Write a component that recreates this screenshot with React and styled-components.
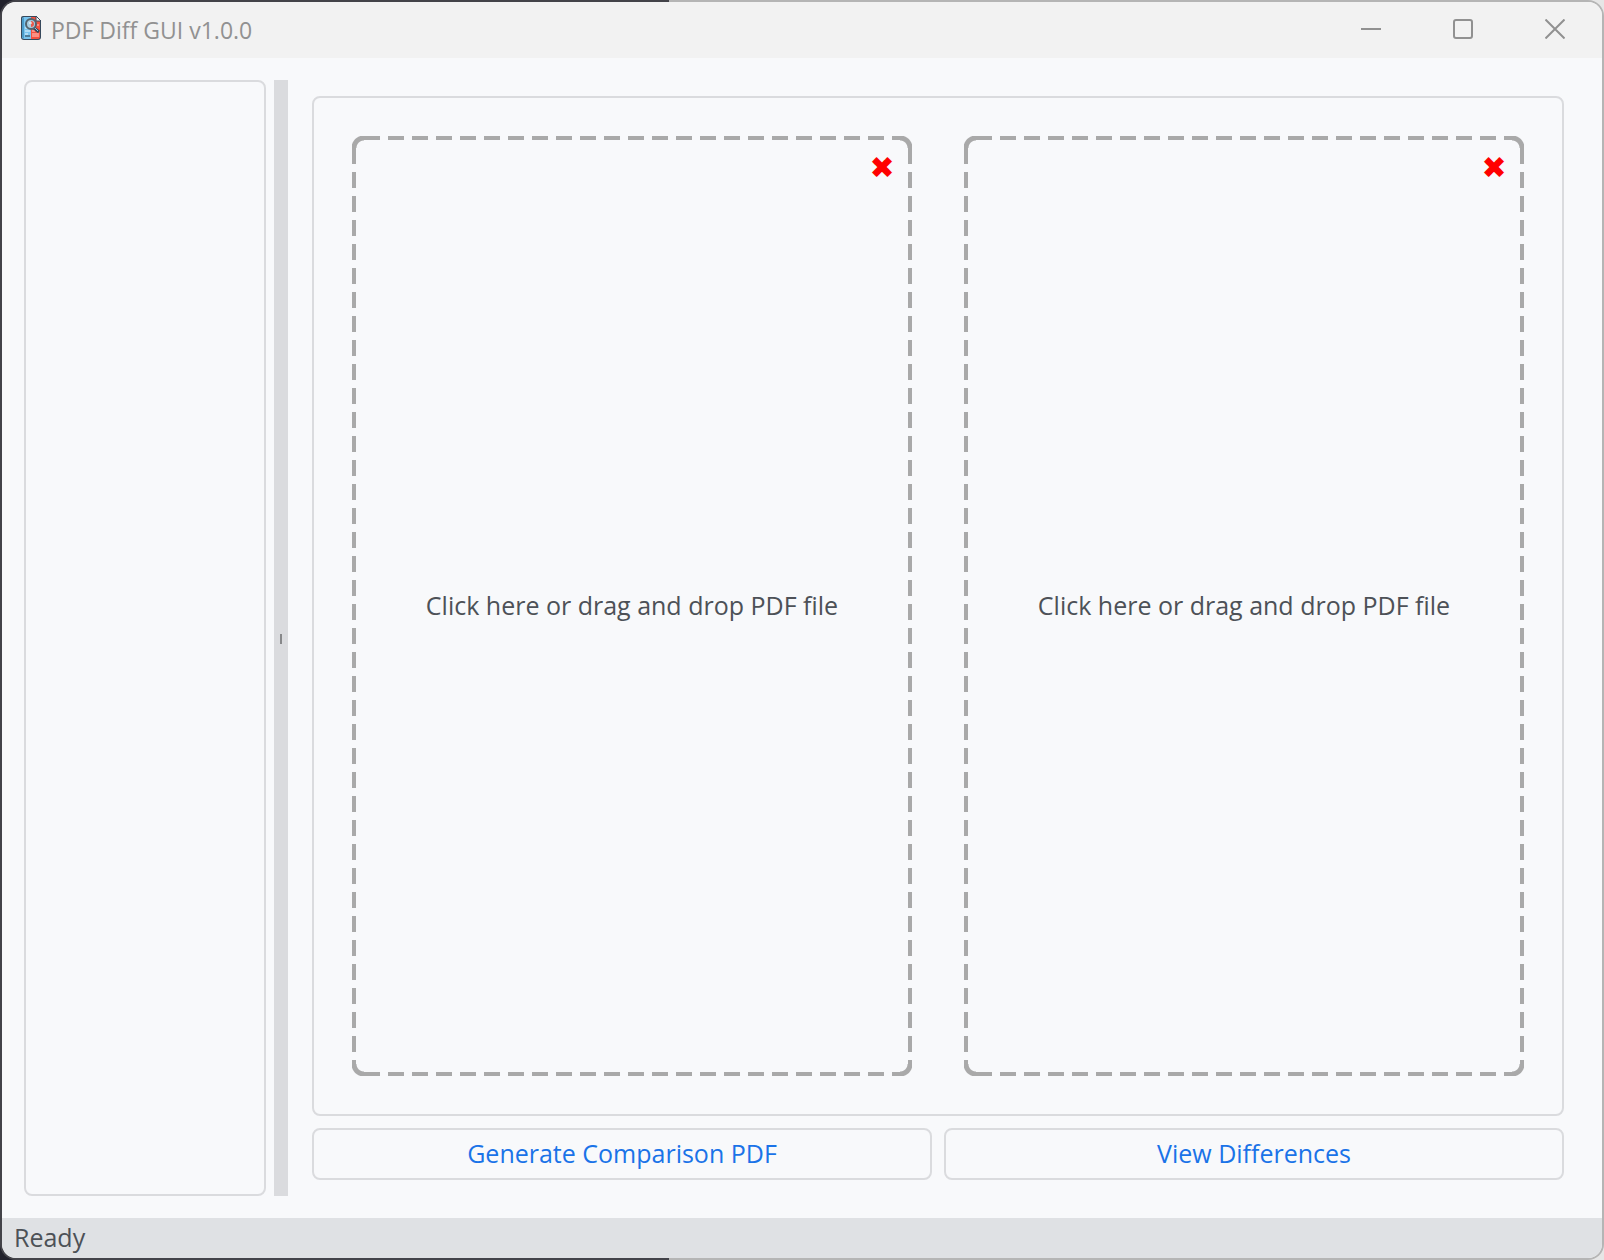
import React from "react";
import styled, { createGlobalStyle } from "styled-components";

const line = "#dadbde";
const dash = "#a9a9a9";

const GlobalStyle = createGlobalStyle`
  *, *::before, *::after { box-sizing: border-box; }
  body {
    margin: 0;
    font-family: "Segoe UI", "Open Sans", "Noto Sans", sans-serif;
    font-size: 25px;
    line-height: 32px;
    color: #4d5157;
  }
  button { font: inherit; color: inherit; }
`;

const Desktop = styled.div`
  min-height: 100vh;
  display: flex;
  background: linear-gradient(90deg, #22222c 0 41.7%, #e6e6e6 41.7%);
`;

const Window = styled.div`
  flex: 1;
  display: flex;
  flex-direction: column;
  overflow: hidden;
  border: 2px solid rgba(115, 115, 115, 0.42);
  border-radius: 16px;
  background: #f8f9fb;
  background-clip: padding-box;
`;

const TitleBar = styled.header`
  display: flex;
  align-items: center;
  height: 56px;
  padding-left: 18px;
  background: #f2f2f2;
  color: #919191;
`;

const AppIcon = styled.svg`
  width: 22px;
  height: 24px;
  margin-bottom: 4px;
`;

const Title = styled.h1`
  flex: 1;
  margin: 0 0 0 9px;
  font-size: 23px;
  font-weight: 400;
`;

const WindowButton = styled.button`
  display: grid;
  place-items: center;
  width: 92px;
  height: 56px;
  padding: 0 2px 2px 0;
  border: 0;
  background: none;

  svg {
    width: 20px;
    height: 20px;
    fill: none;
    stroke: #919191;
    stroke-width: 2;
  }
`;

const Workspace = styled.main`
  flex: 1;
  display: flex;
  padding: 22px;
`;

const PageList = styled.aside`
  width: 242px;
  border: 2px solid ${line};
  border-radius: 8px;
`;

const Splitter = styled.div`
  display: grid;
  place-items: center;
  width: 14px;
  margin: 0 8px;
  padding-top: 2px;
  background: ${line};
  cursor: col-resize;

  &::before {
    content: "";
    width: 2px;
    height: 10px;
    background: #87888a;
  }
`;

const Content = styled.section`
  flex: 1;
  display: flex;
  flex-direction: column;
  gap: 12px;
  padding: 16px;
`;

const FilePanel = styled.div`
  flex: 1;
  display: grid;
  grid-template-columns: 1fr 1fr;
  gap: 52px;
  padding: 38px;
  border: 2px solid ${line};
  border-radius: 8px;
`;

const corner = (at) =>
  `radial-gradient(circle at ${at}, transparent 7px, ${dash} 8px, ${dash} 12px, transparent 13px)`;
const side = (direction) =>
  `repeating-linear-gradient(${direction}, ${dash} 0 16px, transparent 16px 24px)`;

const DropZone = styled.div`
  display: grid;
  background-image:
    ${corner("100% 100%")}, ${corner("0 100%")},
    ${corner("100% 0")}, ${corner("0 0")},
    ${side("90deg")}, ${side("90deg")},
    ${side("180deg")}, ${side("180deg")};
  background-position:
    0 0, 100% 0, 0 100%, 100% 100%,
    12px 0, 12px 100%, 0 12px, 100% 12px;
  background-size:
    12px 12px, 12px 12px, 12px 12px, 12px 12px,
    calc(100% - 24px) 4px, calc(100% - 24px) 4px,
    4px calc(100% - 24px), 4px calc(100% - 24px);
  background-repeat: no-repeat;
`;

const PickFile = styled.button`
  grid-area: 1 / 1;
  padding: 0 0 2px;
  border: 0;
  background: none;
  cursor: pointer;
`;

const ClearFile = styled.button`
  grid-area: 1 / 1;
  place-self: start end;
  display: grid;
  place-items: center;
  width: 32px;
  height: 32px;
  margin: 16px 14px;
  padding: 0;
  border: 0;
  background: none;
  color: #ff0000;
  font-family: "DejaVu Sans", sans-serif;
  font-size: 30px;
  cursor: pointer;
`;

const Actions = styled.div`
  display: grid;
  grid-template-columns: 1fr 1fr;
  gap: 12px;
`;

const ActionButton = styled.button`
  height: 52px;
  padding: 0 0 2px;
  border: 2px solid ${line};
  border-radius: 8px;
  background: none;
  color: #1a73e8;
  cursor: pointer;
`;

const StatusBar = styled.footer`
  height: 40px;
  padding: 3px 12px;
  background: #dfe1e4;
`;

function FileDrop({ name }) {
  return (
    <DropZone>
      <PickFile type="button">Click here or drag and drop PDF file</PickFile>
      <ClearFile type="button" aria-label={`Clear ${name} file`}>✖</ClearFile>
    </DropZone>
  );
}

function CompareIcon() {
  return (
    <AppIcon viewBox="0 0 22 24" aria-hidden="true">
      <path d="M3 0h13l5 5v16a3 3 0 0 1-3 3H4a3 3 0 0 1-3-3V2a2 2 0 0 1 2-2z" fill="#36495c" />
      <path d="M4 1h7v22H4a2 2 0 0 1-2-2V3a2 2 0 0 1 2-2z" fill="#79c4ef" />
      <path d="M2 3v18l2 2V1z" fill="#4b9bc8" />
      <path d="M11 1h5v4h4v16a2 2 0 0 1-2 2h-7z" fill="#f4513f" />
      <path d="M16 0l5 5h-5z" fill="#f1f1f1" stroke="#36495c" />
      <path d="M5 15h5M5 18h3M5 12h3" stroke="#e7f5fd" />
      <path d="M5 20h5" stroke="#263645" />
      <path d="M12 15h3M12 18h7M12 20h7M17 9h2" stroke="#ffd0c8" />
      <path d="M14 12l5 4" stroke="#34495a" strokeWidth="3" />
      <path d="M15 12l3 3" stroke="#8ecbea" />
      <circle cx="11" cy="8" r="5" fill="#a8cde0" stroke="#53636d" strokeWidth="2" />
      <path d="M11 5a3 3 0 0 1 0 6z" fill="#e85a4c" />
      <path d="M9 7h3" stroke="#fff" />
    </AppIcon>
  );
}

export default function App() {
  return (
    <>
      <GlobalStyle />
      <Desktop>
        <Window>
          <TitleBar>
            <CompareIcon />
            <Title>PDF Diff GUI v1.0.0</Title>
            <WindowButton type="button" aria-label="Minimize">
              <svg viewBox="0 0 20 20"><path d="M0 10h20" /></svg>
            </WindowButton>
            <WindowButton type="button" aria-label="Maximize">
              <svg viewBox="0 0 20 20"><rect x="1" y="1" width="18" height="18" rx="2" /></svg>
            </WindowButton>
            <WindowButton type="button" aria-label="Close">
              <svg viewBox="0 0 20 20"><path d="M0.5 0.5l19 19M19.5 0.5l-19 19" /></svg>
            </WindowButton>
          </TitleBar>
          <Workspace>
            <PageList aria-label="Pages" />
            <Splitter role="separator" aria-orientation="vertical" />
            <Content>
              <FilePanel>
                <FileDrop name="first" />
                <FileDrop name="second" />
              </FilePanel>
              <Actions>
                <ActionButton type="button">Generate Comparison PDF</ActionButton>
                <ActionButton type="button">View Differences</ActionButton>
              </Actions>
            </Content>
          </Workspace>
          <StatusBar role="status">Ready</StatusBar>
        </Window>
      </Desktop>
    </>
  );
}
